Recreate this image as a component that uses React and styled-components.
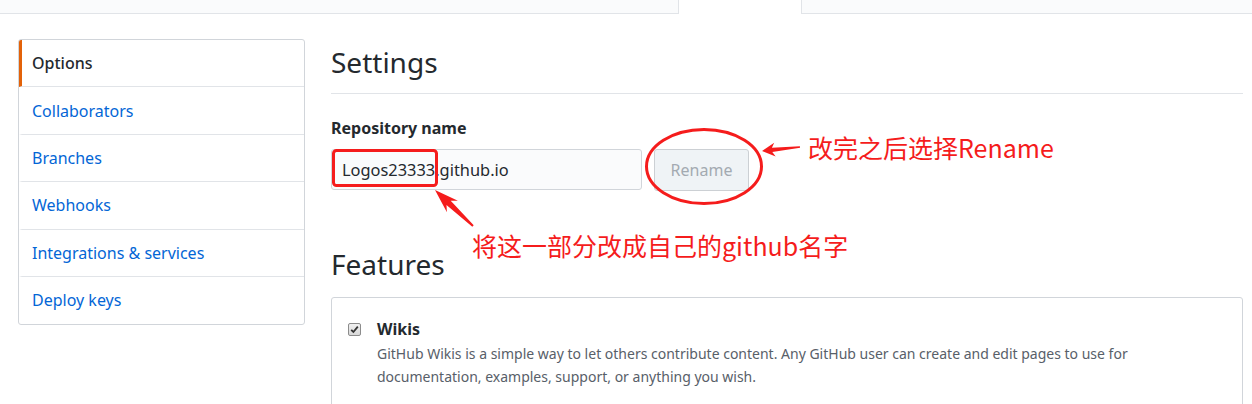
import styled, { createGlobalStyle } from "styled-components";

const GlobalStyle = createGlobalStyle`
  html, body {
    margin: 0;
    padding: 0;
    background: #fff;
  }
  body {
    font-family: "Noto Sans", "Open Sans", sans-serif;
    color: #24292e;
    overflow: hidden;
  }
  * {
    box-sizing: border-box;
  }
`;

const menuItems = [
  "Options",
  "Collaborators",
  "Branches",
  "Webhooks",
  "Integrations & services",
  "Deploy keys",
];

// builds a tapered arrow polygon from tail to tip
function arrowPoints(tail, tip, hl, hw, sw, tw) {
  const dx = tip[0] - tail[0];
  const dy = tip[1] - tail[1];
  const len = Math.hypot(dx, dy);
  const ux = dx / len;
  const uy = dy / len;
  const nx = -uy;
  const ny = ux;
  const base = [tip[0] - ux * hl, tip[1] - uy * hl];
  const notch = [tip[0] - ux * hl * 0.78, tip[1] - uy * hl * 0.78];
  const pts = [
    tip,
    [base[0] + nx * hw, base[1] + ny * hw],
    [notch[0] + nx * sw, notch[1] + ny * sw],
    [tail[0] + nx * tw, tail[1] + ny * tw],
    [tail[0] - nx * tw, tail[1] - ny * tw],
    [notch[0] - nx * sw, notch[1] - ny * sw],
    [base[0] - nx * hw, base[1] - ny * hw],
  ];
  return pts.map((p) => p.map((v) => v.toFixed(1)).join(",")).join(" ");
}

export default function App() {
  return (
    <Page>
      <GlobalStyle />
      <TopNav>
        <NavFill width={678} />
        <SelectedTab />
        <NavFill />
      </TopNav>

      <Layout>
        <Menu>
          {menuItems.map((item, i) => (
            <MenuItem key={item} selected={i === 0}>
              {item}
            </MenuItem>
          ))}
        </Menu>

        <Main>
          <Subhead>Settings</Subhead>
          <Label>Repository name</Label>
          <FormRow>
            <NameInput>Logos23333.github.io</NameInput>
            <RenameButton>Rename</RenameButton>
          </FormRow>

          <Subhead plain>Features</Subhead>
          <FeatureBox>
            <FeatureRow>
              <CheckBox>
                <svg width="9" height="9" viewBox="0 0 9 9">
                  <path
                    d="M1.2 4.8 L3.4 7 L7.8 1.6"
                    fill="none"
                    stroke="#333"
                    strokeWidth="1.8"
                  />
                </svg>
              </CheckBox>
              <div>
                <FeatureTitle>Wikis</FeatureTitle>
                <FeatureNote>
                  GitHub Wikis is a simple way to let others contribute content.
                  Any GitHub user can create and edit pages to use for
                  documentation, examples, support, or anything you wish.
                </FeatureNote>
              </div>
            </FeatureRow>
          </FeatureBox>
        </Main>
      </Layout>

      <Marks width="1252" height="404" viewBox="0 0 1252 404">
        <rect
          x="333.5"
          y="150.5"
          width="103"
          height="35"
          rx="3"
          fill="none"
          stroke="#f51c1c"
          strokeWidth="3"
        />
        <ellipse
          cx="704"
          cy="166.5"
          rx="57.5"
          ry="37"
          fill="none"
          stroke="#f51c1c"
          strokeWidth="3"
        />
        <polygon
          points={arrowPoints([800, 147], [762, 151], 13, 7, 2.2, 0.8)}
          fill="#f51c1c"
        />
        <polygon
          points={arrowPoints([473, 226], [435, 190], 24, 8, 3, 1)}
          fill="#f51c1c"
        />
      </Marks>
      <Note top={135} left={808}>
        改完之后选择Rename
      </Note>
      <Note top={233} left={472}>
        将这一部分改成自己的github名字
      </Note>
    </Page>
  );
}

const Page = styled.div`
  position: relative;
  width: 1252px;
  height: 404px;
  overflow: hidden;
`;

const TopNav = styled.nav`
  display: flex;
  height: 14px;
`;

const NavFill = styled.div`
  flex: ${(p) => (p.width ? `0 0 ${p.width}px` : "1")};
  background: #fafbfc;
  border-bottom: 1px solid #e1e4e8;
`;

const SelectedTab = styled.div`
  width: 124px;
  background: #fff;
  border-left: 1px solid #e1e4e8;
  border-right: 1px solid #e1e4e8;
`;

const Layout = styled.div`
  display: grid;
  grid-template-columns: 287px 912px;
  column-gap: 26px;
  align-items: start;
  margin-top: 25px;
  padding-left: 18px;
`;

const Menu = styled.nav`
  border: 1px solid #d1d5da;
  border-radius: 3px;
  overflow: hidden;
`;

const MenuItem = styled.div`
  height: 47.4px;
  display: flex;
  align-items: center;
  padding-left: 10px;
  font-size: 16px;
  color: ${(p) => (p.selected ? "#24292e" : "#0366d6")};
  font-weight: ${(p) => (p.selected ? 500 : 400)};
  border-bottom: 1px solid #e1e4e8;
  border-left: 3px solid ${(p) => (p.selected ? "#e36209" : "transparent")};

  &:last-child {
    border-bottom: none;
    height: 47px;
  }
`;

const Main = styled.main`
  display: flex;
  flex-direction: column;
`;

const Subhead = styled.h2`
  margin: ${(p) => (p.plain ? "0" : "6px 0 0")};
  font-size: 28px;
  font-weight: 400;
  line-height: 35px;
  padding-bottom: ${(p) => (p.plain ? "0" : "13px")};
  border-bottom: ${(p) => (p.plain ? "none" : "1px solid #e1e4e8")};
`;

const Label = styled.div`
  margin-top: 22px;
  font-size: 16px;
  font-weight: 700;
  line-height: 24px;
`;

const FormRow = styled.div`
  display: flex;
  gap: 12px;
  margin-top: 9px;
  margin-bottom: 56px;
`;

const NameInput = styled.div`
  width: 311px;
  height: 41px;
  display: flex;
  align-items: center;
  padding-left: 10px;
  font-size: 16.4px;
  color: #24292e;
  background: #fafbfc;
  border: 1px solid #d1d5da;
  border-radius: 3px;
`;

const RenameButton = styled.div`
  width: 95px;
  height: 42px;
  display: flex;
  align-items: center;
  justify-content: center;
  font-size: 16px;
  color: #a3aab1;
  background: #eff3f6;
  border: 1px solid #ccd0d4;
  border-radius: 3px;
`;

const FeatureBox = styled.section`
  margin-top: 15px;
  height: 200px;
  border: 1px solid #d1d5da;
  border-radius: 3px;
  padding: 19px 16px 0;
`;

const FeatureRow = styled.div`
  display: grid;
  grid-template-columns: 13px 1fr;
  column-gap: 16px;
  align-items: start;
`;

const CheckBox = styled.span`
  width: 13px;
  height: 13px;
  margin-top: 6px;
  display: flex;
  align-items: center;
  justify-content: center;
  border: 1px solid #8c8c8c;
  border-radius: 2px;
  background: linear-gradient(#f0f0f0, #d8d8d8);
`;

const FeatureTitle = styled.div`
  font-size: 16px;
  font-weight: 700;
  line-height: 24px;
`;

const FeatureNote = styled.p`
  margin: 2px 0 0;
  font-size: 14px;
  line-height: 22.5px;
  color: #586069;
  max-width: 790px;
`;

const Marks = styled.svg`
  position: absolute;
  left: 0;
  top: 0;
  pointer-events: none;
`;

const Note = styled.div`
  position: absolute;
  top: ${(p) => p.top}px;
  left: ${(p) => p.left}px;
  font-family: "Noto Sans CJK SC", "Noto Sans", sans-serif;
  font-size: 25px;
  line-height: 25px;
  color: #f51c1c;
  white-space: nowrap;
`;
